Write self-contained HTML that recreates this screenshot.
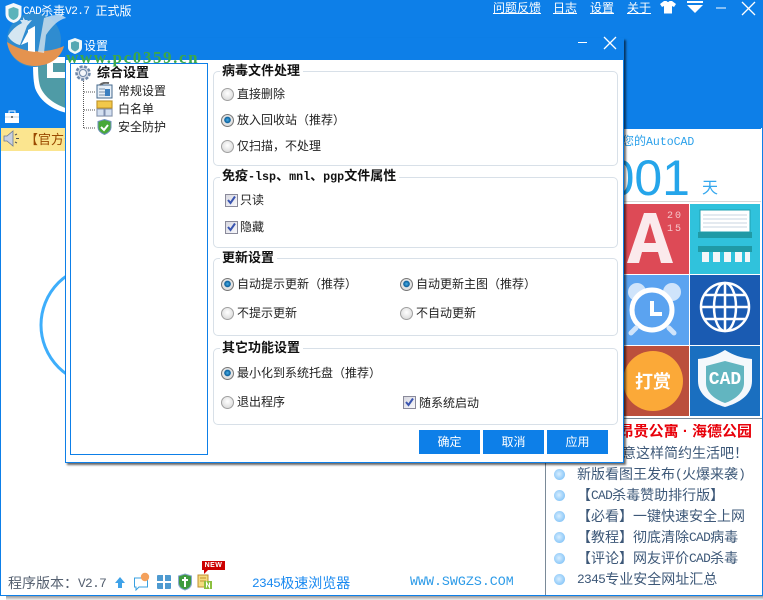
<!DOCTYPE html>
<html lang="zh"><head><meta charset="utf-8"><title>CAD杀毒</title>
<style>
html,body{margin:0;padding:0;width:763px;height:600px;overflow:hidden;background:#fff}
body{position:relative;font-family:"Liberation Sans","WenQuanYi Zen Hei","Noto Sans CJK SC",sans-serif;font-size:12px;color:#222}
div,svg{position:absolute}
.l{font-family:"Liberation Mono",monospace;font-size:.917em;letter-spacing:-.05em;position:relative;top:-1px}
.t{white-space:nowrap;line-height:16px;height:16px}
.w{color:#fff}
.u{text-decoration:underline}
.b{font-weight:bold;font-size:13px;color:#111;background:#fff;padding:0 3px 0 2px}
.g{border:1px solid #d8e0e8;border-radius:5px;left:213px;width:403px;box-sizing:content-box}
.r{width:13px;height:13px;border-radius:50%;border:1px solid #a0a0a0;box-sizing:border-box;background:radial-gradient(circle at 50% 40%,#fff,#ddd 75%,#c8c8c8)}
.r.o{background:radial-gradient(circle at 50% 45%,#4ab0e8 0,#0a5f9c 35%,#e8e8e8 45%,#ccc 100%);border-color:#777}
.c{width:13px;height:13px;border:1px solid #8a8a9a;box-sizing:border-box;background:linear-gradient(135deg,#d8d8e0,#f8f8fc)}
.c svg{left:0;top:0}
.btn{top:430px;width:61px;height:24px;background:#0d7fe8;color:#fff;text-align:center;line-height:24px}
.li{left:577px;color:#3d5878;font-size:14px}
.dot{left:554px;width:11px;height:11px;border-radius:50%;background:radial-gradient(circle at 45% 45%,#d8eeff,#8cc8f8 70%,#64aeea)}
</style></head><body>
<!-- main window -->
<div style="left:6px;top:596px;width:757px;height:4px;background:linear-gradient(#999,#eee)"></div>
<div style="left:0;top:0;width:763px;height:596px;box-sizing:border-box;border:1px solid #0d7fe8;border-top:0;background:#fff"></div>
<div style="left:0;top:0;width:763px;height:128px;background:#0d7fe8"></div>

<!-- watermark logo -->
<svg style="left:0;top:0" width="100" height="128" viewBox="0 0 100 128">
<path d="M33 58h40v56C55 112 40 102 35 88c-2-8-2-18-2-30z" fill="#fff"/>
<path d="M38 60h35v50C58 107 44 98 40 86c-2-7-2-16-2-26z" fill="#4f9ba6"/>
<path d="M47 57h26v21H47z" fill="#fff"/><path d="M53 63h20v9H53z" fill="#4f9ba6"/>
<circle cx="34" cy="40" r="27" fill="#2f8cd0"/>
<path d="M7 42c7 4 14 8 24 9 10 1 22 0 33-5-3 12-15 20-29 20C20 66 9 56 7 42z" fill="#e4934f"/>
<path d="M8 36C14 26 22 22 32 20l-5 6-7 19C15 44 10 40 8 36z" fill="#e8f0f4" opacity=".9"/>
<path d="M21 45l7-13v-2l7-4v26l-7-1v-9z" fill="#fff"/>
<path d="M44 18c10-4 18-4 22 0-8 2-14 8-20 17l-2 18-6-1z" fill="#dfe8ee" opacity=".75"/>
<path d="M23 17l2 3 3 0-2 3 1 3-3-2-3 2 1-3-2-3 3 0z" fill="#cfe4f4"/>
</svg>

<!-- title bar -->
<svg style="left:4px;top:2px" width="19" height="22" viewBox="0 0 19 22"><path d="M9.500 1l8 3v8c0 5-4 8-8 9-4-1-8-4-8-9V4z" fill="#f4f8fb"/><path d="M9.500 5l5 2v5c0 3-2 5-5 6-3-1-5-3-5-6V7z" fill="#5bb3bb"/></svg>
<div class="t w" style="left:23px;top:3px"><span class="l">CAD</span>杀毒<span class="l">V2.7 </span>正式版</div>
<div class="t w u" style="left:493px;top:0">问题反馈</div>
<div class="t w u" style="left:553px;top:0">日志</div>
<div class="t w u" style="left:590px;top:0">设置</div>
<div class="t w u" style="left:627px;top:0">关于</div>
<svg style="left:659px;top:0" width="18" height="14" viewBox="0 0 18 14"><path d="M5 1h2.500q1.500 2 3 0H13l4 3-2 3-2-1v7.500H5V6L3 7 1 4z" fill="#fff"/></svg>
<svg style="left:686px;top:0" width="18" height="14" viewBox="0 0 18 14"><path d="M1 1h16v2H1zM1 5h16l-8 8z" fill="#fff"/></svg>
<svg style="left:716px;top:1px" width="44" height="15" viewBox="0 0 44 15"><path d="M0 7h10" stroke="#fff" stroke-width="1"/><path d="M26 1l13 13M39 1L26 14" stroke="#fff" stroke-width="1.300"/></svg>

<!-- left side -->
<svg style="left:4px;top:109px" width="16" height="15" viewBox="0 0 16 15"><path d="M1 4h14v10H1z" fill="#fff"/><path d="M5 4V2h6v2" fill="none" stroke="#fff"/><path d="M1 8h14" stroke="#c9d4de"/><rect x="7" y="7" width="2" height="2" fill="#777"/></svg>
<div style="left:1px;top:128px;width:64px;height:23px;background:#fbe58f"></div>
<svg style="left:3px;top:129px" width="18" height="19" viewBox="0 0 18 19"><path d="M1 7h3l6-5v15l-6-5H1z" fill="#c8d0e0" stroke="#6a7a98" stroke-width=".8"/><path d="M12 6l2-1M13 9.500h3M12 13l2 1" stroke="#555"/></svg>
<div class="t" style="left:25px;top:132px;color:#9a4a00;font-size:13px;width:40px;overflow:hidden">【官方公</div>
<svg style="left:38px;top:260px" width="60" height="130" viewBox="0 0 60 130"><circle cx="63" cy="65" r="60" fill="none" stroke="#3eaefb" stroke-width="3"/></svg>

<div class="t" style="left:8px;top:575px;color:#556070;font-size:14px">程序版本：<span class="l">V2.7</span></div>
<svg style="left:114px;top:576px" width="12" height="13" viewBox="0 0 12 13"><path d="M6 1l5 6H8v5H4V7H1z" fill="#3ea2e8"/></svg>
<svg style="left:133px;top:572px" width="17" height="19" viewBox="0 0 17 19"><path d="M1.500 6h13v9H6l-3 3v-3H1.500z" fill="#fff" stroke="#39a0e0"/><circle cx="12" cy="5" r="4.200" fill="#f4a15c"/></svg>
<svg style="left:157px;top:575px" width="14" height="14" viewBox="0 0 14 14"><path d="M0 1q0-1 1-1h5v6H0zM8 0h5q1 0 1 1v5H8zM0 8h6v6H1q-1 0-1-1zM8 8h6v5q0 1-1 1H8z" fill="#4e9ad0"/></svg>
<svg style="left:177px;top:573px" width="16" height="18" viewBox="0 0 16 18"><path d="M8 1l6.500 2v7c0 4-3 6-6.500 7-3.500-1-6.500-3-6.500-7V3z" fill="#3e9a3e" stroke="#8aa8d0"/><path d="M8 4v10M5 7h6" stroke="#fff" stroke-width="2"/></svg>
<svg style="left:197px;top:574px" width="16" height="16" viewBox="0 0 16 16"><rect x="1" y="1" width="10" height="12" fill="#f4dc80" stroke="#c09030"/><path d="M3 4h6M3 7h6" stroke="#c09030"/><rect x="7" y="7" width="8" height="8" fill="#8cc040"/><path d="M9.500 13.500v-5l3 5v-5" stroke="#fff" fill="none"/></svg>
<div style="left:202px;top:561px;width:23px;height:9px;background:#cc0000;color:#fff;font:bold 7px/9px 'Liberation Sans',sans-serif;text-align:center;letter-spacing:.5px">NEW</div>
<div style="left:204px;top:570px;width:0;height:0;border-left:4px solid #cc0000;border-bottom:4px solid transparent"></div>
<div class="t" style="left:252px;top:575px;color:#1b8af0;font-size:14px"><span class="l">2345</span>极速浏览器</div>
<div class="t" style="left:410px;top:574px;color:#2d9be8;font-size:13.300px;font-family:'Liberation Mono',monospace">WWW.SWGZS.COM</div>

<!-- right panel -->
<div style="left:545px;top:419px;width:1px;height:176px;background:#7a8a98"></div>
<div style="left:623px;top:128px;width:138px;height:1px;background:#0d7fe8"></div>
<div class="t" style="left:622px;top:133px;color:#2aa0ea;font-size:12px;width:80px">您的<span style="font:11.500px 'Liberation Mono',monospace">AutoCAD</span></div>
<div class="t" style="left:622px;top:154px;width:68px;height:46px;overflow:hidden;line-height:48px;color:#25a5ea;font-size:50px;direction:rtl;text-align:left">001</div>
<div class="t" style="left:702px;top:181px;color:#36a8ee;font-size:16px">天</div>
<div style="left:623px;top:201px;width:138px;height:1px;background:#d8d8d8"></div>

<!-- tiles -->
<svg style="left:623px;top:204px" width="137" height="212" viewBox="0 0 137 212">
<rect x="0" width="66" height="70" fill="#dd4a56"/>
<path d="M4 59L21 9h12l17 50H38l-3-11H19l-3 11zM21 39h12l-6-20z" fill="#fbeaec" fill-rule="evenodd"/>
<text x="44" y="14" font-family="Liberation Mono,monospace" font-size="10" fill="#f5c5ca" letter-spacing="2">20</text>
<text x="44" y="27" font-family="Liberation Mono,monospace" font-size="10" fill="#f5c5ca" letter-spacing="2">15</text>
<rect x="67" width="70" height="70" fill="#30c2dc"/>
<rect x="77" y="6" width="50" height="22" fill="#fff" stroke="#1fa0b0"/>
<path d="M80 11h44M80 15h44M80 19h44M80 23h44" stroke="#c8d4e0"/>
<rect x="75" y="28" width="54" height="6" fill="#1f9aa6"/>
<rect x="75" y="42" width="54" height="6" fill="#1f9aa6"/>
<path d="M79 48h7v10h-7zM90 48h7v10h-7zM101 48h7v10h-7zM112 48h7v10h-7zM122 48h5v10h-5z" fill="#f3f6f8"/>
<rect x="0" y="71" width="66" height="70" fill="#5ba3f0"/>
<circle cx="14" cy="88" r="9" fill="#cfe4fb"/><circle cx="49" cy="88" r="9" fill="#cfe4fb"/>
<circle cx="29" cy="106" r="20" fill="#5ba3f0" stroke="#fff" stroke-width="5"/>
<path d="M29 97v13h10" fill="none" stroke="#fff" stroke-width="4"/>
<path d="M13 124l-5 5M46 124l5 5" stroke="#cfe4fb" stroke-width="5" stroke-linecap="round"/>
<rect x="67" y="71" width="70" height="70" fill="#1a5bb2"/>
<g fill="none" stroke="#fff" stroke-width="2.500"><circle cx="102" cy="103" r="24"/><ellipse cx="102" cy="103" rx="11" ry="24"/><path d="M102 79v48M78 103h48M82 91h40M82 115h40"/></g>
<rect x="0" y="142" width="66" height="70" fill="#bb4f3c"/>
<circle cx="30" cy="177" r="30" fill="#fba938"/>
<text x="30" y="184" text-anchor="middle" font-family="WenQuanYi Zen Hei,Noto Sans CJK SC,sans-serif" font-size="18" font-weight="bold" fill="#fff">打赏</text>
<rect x="67" y="142" width="70" height="70" fill="#1a6fc0"/>
<path d="M102 146c8 5 16 8 27 9v22c0 14-13 22-27 26-14-4-27-12-27-26v-22c11-1 19-4 27-9z" fill="#f4f8fc"/>
<path d="M102 157l19 5v17c0 10-10 17-19 20-9-3-19-10-19-20v-17z" fill="#62b5c0"/>
<text x="102" y="180" text-anchor="middle" font-family="Liberation Mono,monospace" font-size="18" font-weight="bold" fill="#fff">CAD</text>
</svg>
<div style="left:546px;top:418px;width:216px;height:1px;background:#7a8a98"></div>

<div class="t" style="left:560px;top:424px;width:192px;text-align:right;color:#e8000a;font-size:15px;font-weight:bold;overflow:hidden">昂贵公寓 · 海德公园</div>
<div class="t" style="left:622px;top:445px;color:#3d5878;font-size:14px">意这样简约生活吧！</div>
<div class="dot" style="top:469px"></div><div class="t li" style="top:466px">新版看图王发布<span class="l">(</span>火爆来袭<span class="l">)</span></div>
<div class="dot" style="top:490px"></div><div class="t li" style="top:487px">【<span class="l">CAD</span>杀毒赞助排行版】</div>
<div class="dot" style="top:511px"></div><div class="t li" style="top:508px">【必看】一键快速安全上网</div>
<div class="dot" style="top:532px"></div><div class="t li" style="top:529px">【教程】彻底清除<span class="l">CAD</span>病毒</div>
<div class="dot" style="top:553px"></div><div class="t li" style="top:550px">【评论】网友评价<span class="l">CAD</span>杀毒</div>
<div class="dot" style="top:574px"></div><div class="t li" style="top:571px"><span class="l">2345</span>专业安全网址汇总</div>

<!-- dialog -->
<div style="left:65px;top:38px;width:559px;height:425px;box-sizing:border-box;border:1px solid #0d7fe8;background:#0d7fe8;box-shadow:2px 2px 2px rgba(0,0,0,.6)"></div>
<div style="left:66px;top:60px;width:557px;height:402px;background:#fff"></div>
<svg style="left:67px;top:37px" width="16" height="18" viewBox="0 0 16 18"><path d="M8 1l7 2.500v7C15 14 11 16 8 17c-3-1-7-3-7-6.500v-7z" fill="#f0f8f8"/><path d="M8 4l4 1.500v5c0 2-2 3-4 4-2-1-4-2-4-4v-5z" fill="#56a8b2"/></svg>
<div class="t w" style="left:84px;top:38px">设置</div>
<svg style="left:578px;top:36px" width="40" height="14" viewBox="0 0 40 14"><path d="M0 6.500h9" stroke="#fff"/><path d="M26 1l12 12M38 1L26 13" stroke="#fff" stroke-width="1.300"/></svg>

<!-- tree -->
<div style="left:70px;top:63px;width:138px;height:392px;box-sizing:border-box;border:1px solid #0d7fe8;background:#fff"></div>
<svg style="left:74px;top:64px" width="18" height="18" viewBox="0 0 18 18"><circle cx="9" cy="9" r="6.500" fill="#d4dbe8" stroke="#7088a8" stroke-width="2.500" stroke-dasharray="3 1.500"/><circle cx="9" cy="9" r="3.500" fill="#f4f6fa" stroke="#7088a8"/></svg>
<div class="t b" style="left:95px;top:65px;background:none">综合设置</div>
<svg style="left:82px;top:81px" width="16" height="50" viewBox="0 0 16 50"><path d="M1.500 0v47M2 11h12M2 29h12M2 47h12" stroke="#555" stroke-dasharray="1 1" fill="none"/></svg>
<svg style="left:96px;top:82px" width="17" height="17" viewBox="0 0 17 17"><rect x="1" y="3" width="15" height="13" fill="#e8f0f8" stroke="#44688c"/><path d="M3 7h6M3 10h6M3 13h6" stroke="#7a90a8"/><rect x="9" y="7" width="5" height="7" fill="#3a7fc0"/><path d="M4 3q3-3 9-2" stroke="#666" stroke-width="2" fill="none"/></svg>
<div class="t" style="left:118px;top:83px">常规设置</div>
<svg style="left:96px;top:100px" width="17" height="17" viewBox="0 0 17 17"><rect width="17" height="17" fill="#efefe8"/><rect x="1" y="1" width="15" height="7" fill="#f2c84a" stroke="#c09020"/><rect x="1" y="9" width="7" height="7" fill="#d4e0f0" stroke="#8090b0"/><rect x="9" y="9" width="7" height="7" fill="#d4e0f0" stroke="#8090b0"/></svg>
<div class="t" style="left:118px;top:101px">白名单</div>
<svg style="left:97px;top:119px" width="15" height="16" viewBox="0 0 15 16"><path d="M7.500.5l6.500 2v6c0 3.500-3 5.500-6.500 7-3.500-1.500-6.500-3.500-6.500-7v-6z" fill="#48a838" stroke="#7090c0"/><path d="M4 8l3 3 4-5" fill="none" stroke="#fff" stroke-width="2"/></svg>
<div class="t" style="left:118px;top:119px">安全防护</div>

<!-- groups -->
<div class="g" style="top:71px;height:93px"></div>
<div class="t b" style="left:220px;top:63px">病毒文件处理</div>
<div class="r" style="left:221px;top:88px"></div><div class="t" style="left:237px;top:86px">直接删除</div>
<div class="r o" style="left:221px;top:114px"></div><div class="t" style="left:237px;top:112px">放入回收站（推荐）</div>
<div class="r" style="left:221px;top:140px"></div><div class="t" style="left:237px;top:138px">仅扫描，不处理</div>

<div class="g" style="top:177px;height:69px"></div>
<div class="t b" style="left:220px;top:168px">免疫<span style="font:bold 11.700px 'Liberation Mono',monospace">-lsp</span>、<span style="font:bold 11.700px 'Liberation Mono',monospace">mnl</span>、<span style="font:bold 11.700px 'Liberation Mono',monospace">pgp</span>文件属性</div>
<div class="c" style="left:225px;top:194px"><svg width="11" height="11" viewBox="0 0 11 11"><path d="M2 5l2.500 3L9 1.500" fill="none" stroke="#3a55b0" stroke-width="2"/></svg></div><div class="t" style="left:240px;top:192px">只读</div>
<div class="c" style="left:225px;top:221px"><svg width="11" height="11" viewBox="0 0 11 11"><path d="M2 5l2.500 3L9 1.500" fill="none" stroke="#3a55b0" stroke-width="2"/></svg></div><div class="t" style="left:240px;top:219px">隐藏</div>

<div class="g" style="top:258px;height:76px"></div>
<div class="t b" style="left:220px;top:250px">更新设置</div>
<div class="r o" style="left:221px;top:278px"></div><div class="t" style="left:237px;top:276px">自动提示更新（推荐）</div>
<div class="r o" style="left:400px;top:278px"></div><div class="t" style="left:416px;top:276px">自动更新主图（推荐）</div>
<div class="r" style="left:221px;top:307px"></div><div class="t" style="left:237px;top:305px">不提示更新</div>
<div class="r" style="left:400px;top:307px"></div><div class="t" style="left:416px;top:305px">不自动更新</div>

<div class="g" style="top:348px;height:75px"></div>
<div class="t b" style="left:220px;top:340px">其它功能设置</div>
<div class="r o" style="left:221px;top:367px"></div><div class="t" style="left:237px;top:365px">最小化到系统托盘（推荐）</div>
<div class="r" style="left:221px;top:396px"></div><div class="t" style="left:237px;top:394px">退出程序</div>
<div class="c" style="left:403px;top:396px"><svg width="11" height="11" viewBox="0 0 11 11"><path d="M2 5l2.500 3L9 1.500" fill="none" stroke="#3a55b0" stroke-width="2"/></svg></div><div class="t" style="left:419px;top:395px">随系统启动</div>

<div class="btn" style="left:419px">确定</div>
<div class="btn" style="left:483px">取消</div>
<div class="btn" style="left:547px">应用</div>

<div class="t" style="left:66px;top:49px;width:140px;color:#3ca84a;font:bold 17px/18px 'Liberation Serif',serif;height:18px;letter-spacing:1.600px">www.pc0359.cn</div>
</body></html>
